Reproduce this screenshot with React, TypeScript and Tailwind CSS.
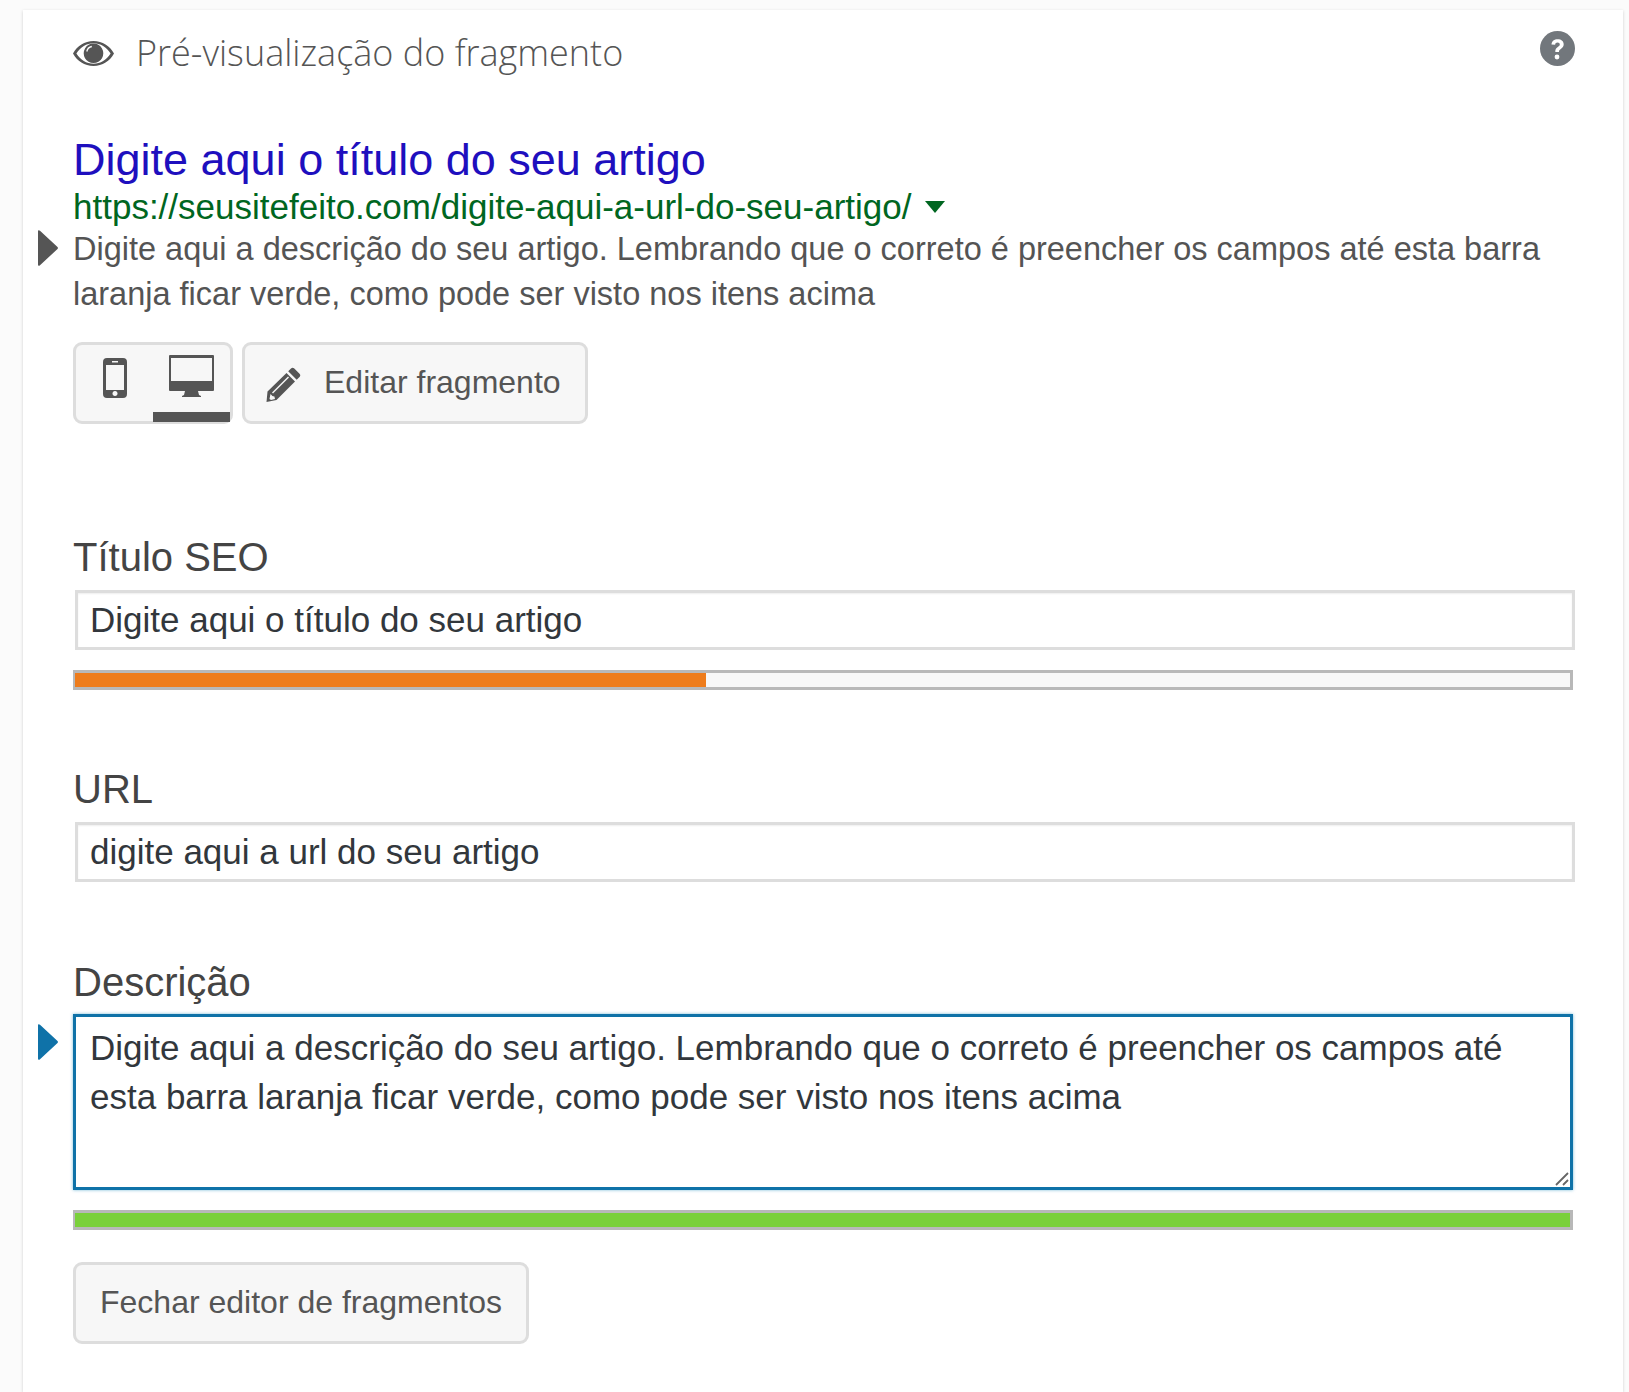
const arial = "font-['Liberation_Sans',Arial,sans-serif]"

function EyeIcon() {
  return (
    <svg width="41" height="25" viewBox="0 0 41 25" className="shrink-0">
      <path fillRule="evenodd" fill="#555" d="M20.500 0C29.500 0 36.800 4.900 41 12.500 36.800 20.100 29.500 25 20.500 25S4.200 20.100 0 12.500C4.200 4.900 11.500 0 20.500 0zM20.500 2.200C13.500 2.200 7.400 6.200 3.400 12.500 7.400 18.800 13.500 22.800 20.500 22.800S33.600 18.800 37.600 12.500C33.600 6.200 27.500 2.200 20.500 2.200z" />
      <path fill="#555" d="M20.500 2.500a9.800 9.800 0 1 1-.01 0z" />
      <path fill="none" stroke="#fff" strokeWidth="1.300" d="M13.800 10.500C14.300 8 16.200 6 18.800 5.500" />
    </svg>
  )
}

function HelpIcon() {
  return (
    <svg width="35" height="35" viewBox="0 0 35 35" className="shrink-0">
      <circle cx="17.500" cy="17.500" r="17.500" fill="#72777c" />
      <path d="M11.500 13.500c.3-3.400 2.700-5.200 6.200-5.200 3.600 0 6 2 6 5 0 2.300-1.200 3.500-2.900 4.600-1.400.9-1.800 1.500-1.800 3.100h-3.700c-.1-2.600.6-3.800 2.500-5 1.400-.9 2-1.500 2-2.500 0-1.100-.9-1.900-2.200-1.900-1.500 0-2.300.8-2.500 2.200z" fill="#fff" />
      <circle cx="17" cy="26" r="2.400" fill="#fff" />
    </svg>
  )
}

function PhoneIcon() {
  return (
    <svg width="24" height="40" viewBox="0 0 24 40">
      <path fillRule="evenodd" fill="#555" d="M4 0h16a4 4 0 0 1 4 4v32a4 4 0 0 1-4 4H4a4 4 0 0 1-4-4V4a4 4 0 0 1 4-4zM3 7v25h18V7zM9 3v1.500h6V3zM12 33a2.500 2.500 0 1 0 .01 0z" />
    </svg>
  )
}

function DesktopIcon() {
  return (
    <svg width="45" height="42" viewBox="0 0 45 42">
      <path fillRule="evenodd" fill="#555" d="M1 0h43a1 1 0 0 1 1 1v34a1 1 0 0 1-1 1H29l1 4 2 1v1H13v-1l2-1 1-4H1a1 1 0 0 1-1-1V1a1 1 0 0 1 1-1zM2 3v23h41V3z" />
    </svg>
  )
}

function PencilIcon() {
  return (
    <svg width="35" height="35" viewBox="0 0 35 35" className="mt-[5px]">
      <path fillRule="evenodd" fill="#555" d="M25 1.500c1-1 2.300-1 3.300 0l5.200 5.200c1 1 1 2.300 0 3.300l-2.800 2.800-8.500-8.500zM20.500 6 29 14.500 10.500 33 .5 35l1-10.500zM22 9.500 6 25.500l1 1L23 10.500zM4.500 27 3.500 32l1.500 1 4-1-.6-2.500-2-.4z" />
    </svg>
  )
}

function Caret({ color }: { color: string }) {
  return (
    <svg width="20" height="36" viewBox="0 0 20 36" className="absolute left-[-35px] top-0" fill={color}>
      <path d="M0 1.500C0 0 1 -.3 2 .8L19.500 17c.6.6.6 1.400 0 2L2 35.200C1 36.300 0 36 0 34.500z" />
    </svg>
  )
}

function Progress({ color, width }: { color: string; width: string }) {
  return (
    <div className="h-5 border-y-[3px] border-r-[3px] border-l-[2px] border-[#b8b8b8] bg-[#f7f7f7]">
      <div className="h-full" style={{ width, backgroundColor: color }} />
    </div>
  )
}

export default function App() {
  return (
    <div className={`min-h-[1392px] bg-[#fbfbfb] pt-[10px] pl-[23px] ${arial}`}>
      <div className="h-[1382px] w-[1600px] bg-white pl-[50px] pr-[50px] shadow-[0_1px_3px_rgba(0,0,0,0.18)]">
        <div className="flex h-[88px] items-start justify-between pt-[18px]">
          <div className="flex items-center gap-[22px] pt-[2px]">
            <EyeIcon />
            <h2 className="font-['Open_Sans',sans-serif] text-[36px] font-light leading-[46px] text-[#555]">
              Pré-visualização do fragmento
            </h2>
          </div>
          <div className="mr-[-2px] mt-[3px]">
            <HelpIcon />
          </div>
        </div>

        <div className="mt-[37px] text-[45px] leading-[50px] text-[#1e0fbe]">Digite aqui o título do seu artigo</div>
        <div className="mt-[4px] flex items-center gap-[14px] text-[35px] leading-[36px] text-[#006621]">
          <span>https://seusitefeito.com/digite-aqui-a-url-do-seu-artigo/</span>
          <span className="h-0 w-0 border-x-[10px] border-t-[12px] border-x-transparent border-t-[#006621]" />
        </div>
        <div className="relative mt-[2px] text-[32.500px] leading-[45px] text-[#545454]">
          <div className="absolute top-[3px] left-0">
            <Caret color="#555" />
          </div>
          Digite aqui a descrição do seu artigo. Lembrando que o correto é preencher os campos até esta barra laranja ficar verde, como pode ser visto nos itens acima
        </div>

        <div className="mt-[25px] flex gap-[9px]">
          <div className="flex h-[82px] w-[160px] rounded-[9px] border-[3px] border-[#ddd] bg-[#f7f7f7]">
            <div className="flex w-[77px] justify-center pt-[13px]">
              <PhoneIcon />
            </div>
            <div className="mb-[-1px] flex w-[77px] flex-col items-center border-b-[10px] border-[#555] pt-[10px]">
              <DesktopIcon />
            </div>
          </div>
          <div className="flex h-[82px] w-[346px] items-center gap-[23px] rounded-[9px] border-[3px] border-[#ddd] bg-[#f7f7f7] pb-[3px] pl-[21px] text-[32px] text-[#555]">
            <PencilIcon />
            Editar fragmento
          </div>
        </div>

        <label className="mt-[109px] block text-[40px] leading-[48px] text-[#444]">Título SEO</label>
        <input
          readOnly
          defaultValue="Digite aqui o título do seu artigo"
          className="mt-[9px] ml-[2px] block h-[60px] w-[1500px] border-[3px] border-[#ddd] bg-white pl-[12px] text-[35px] text-[#32373c] shadow-[inset_0_1px_2px_rgba(0,0,0,0.07)] outline-none"
        />
        <div className="mt-[20px] w-[1500px]">
          <Progress color="#ee7c1b" width="42.2%" />
        </div>

        <label className="mt-[75px] block text-[40px] leading-[48px] text-[#444]">URL</label>
        <input
          readOnly
          defaultValue="digite aqui a url do seu artigo"
          className="mt-[9px] ml-[2px] block h-[60px] w-[1500px] border-[3px] border-[#ddd] bg-white pl-[12px] text-[35px] text-[#32373c] shadow-[inset_0_1px_2px_rgba(0,0,0,0.07)] outline-none"
        />

        <label className="mt-[76px] block text-[40px] leading-[48px] text-[#444]">Descrição</label>
        <div className="relative mt-[8px] w-[1500px]">
          <div className="absolute top-[10px] left-0">
            <Caret color="#0f72a8" />
          </div>
          <textarea
            readOnly
            rows={3}
            defaultValue="Digite aqui a descrição do seu artigo. Lembrando que o correto é preencher os campos até esta barra laranja ficar verde, como pode ser visto nos itens acima"
            className="block h-[176px] w-full resize-none border-[3px] border-[#0f72a8] bg-white px-[14px] py-[6px] text-[35px] leading-[49px] text-[#32373c] shadow-[0_0_3px_rgba(30,140,190,0.6)] outline-none"
          />
          <svg width="14" height="14" viewBox="0 0 14 14" className="absolute right-[4px] bottom-[4px]" stroke="#666" strokeWidth="1.800">
            <path d="M1 13 13 1M8 13l5-5" />
          </svg>
        </div>
        <div className="mt-[20px] w-[1500px]">
          <Progress color="#7ad03a" width="100%" />
        </div>

        <div className="mt-[32px] flex h-[82px] w-[456px] items-center justify-center rounded-[9px] border-[3px] border-[#ddd] bg-[#f7f7f7] pb-[2px] text-[32px] text-[#555]">
          Fechar editor de fragmentos
        </div>
      </div>
    </div>
  )
}
